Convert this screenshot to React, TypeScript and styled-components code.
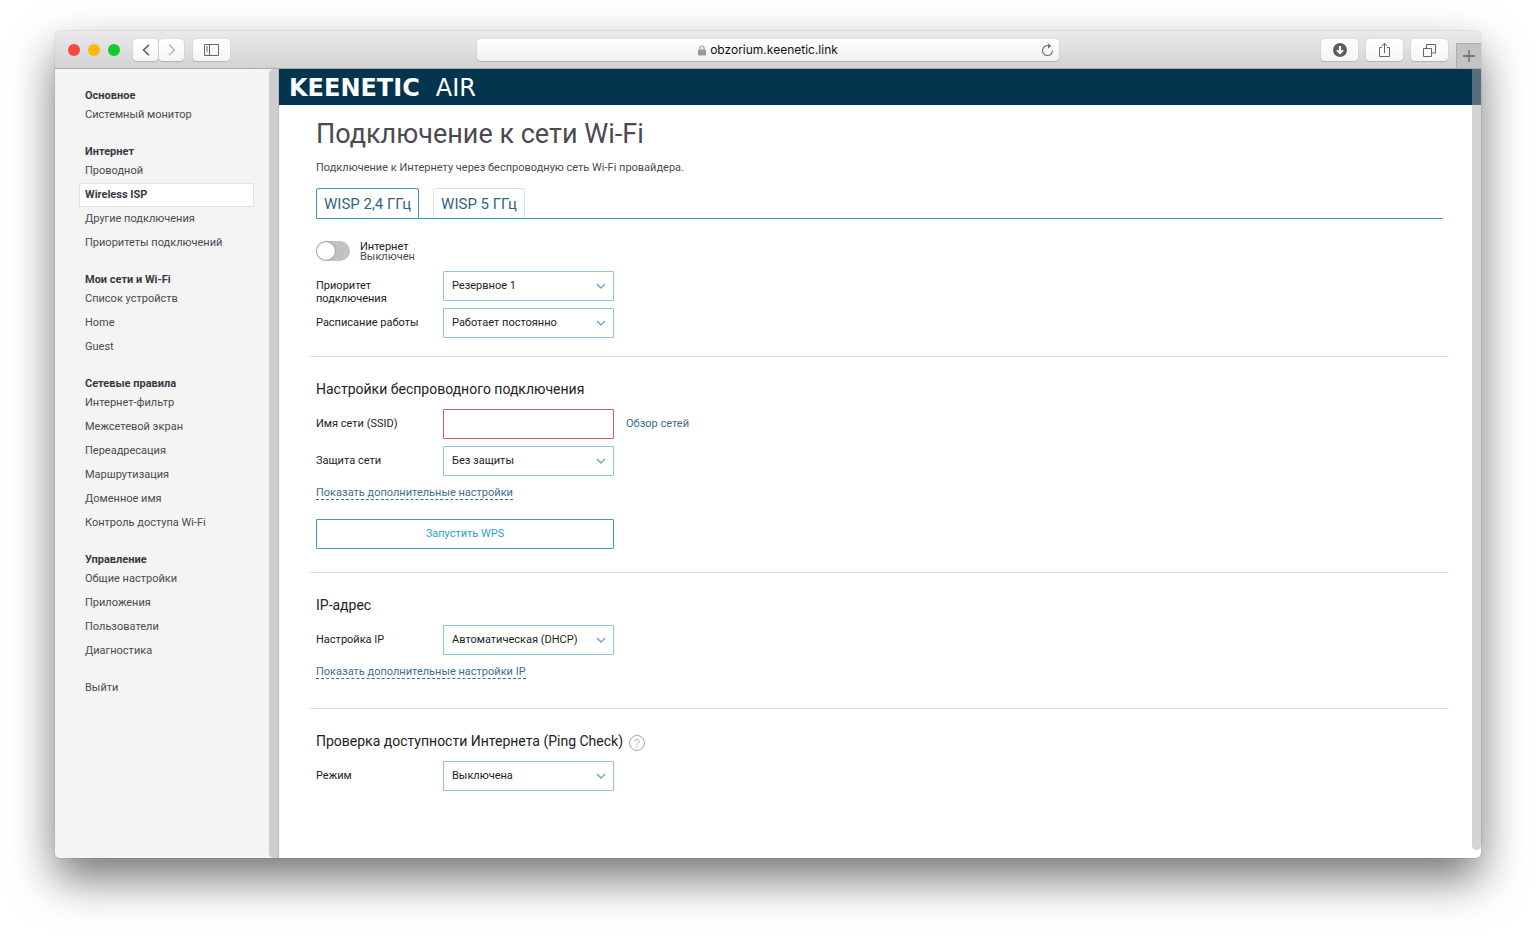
import React, { useState } from "react";
import styled, { createGlobalStyle } from "styled-components";

const color = {
  navy: "#03354e",
  accent: "#3a9fbd",
  control: "#8fc3d8",
  line: "#d3e6ef",
  link: "#3d6d8d",
  text: "#222226",
  muted: "#4b4952",
  side: "#f4f4f4",
};

const GlobalStyle = createGlobalStyle`
  *, *::before, *::after { box-sizing: border-box; }
  body {
    margin: 0;
    background: #fff;
    color: ${color.text};
    font-family: Roboto, "Noto Sans", sans-serif;
    font-size: 11px;
    line-height: 14px;
  }
  button, input, select { font: inherit; color: inherit; margin: 0; }
  h1, h2, p, ul { margin: 0; padding: 0; }
  ul { list-style: none; }
  a { color: inherit; text-decoration: none; }
`;

const Desktop = styled.div`
  display: flex;
  min-height: 100vh;
  padding: 31px 55px 79px;
`;

const Window = styled.div`
  flex: 1;
  min-width: 0;
  display: flex;
  flex-direction: column;
  border-radius: 5px;
  overflow: hidden;
  background: #fff;
  box-shadow: 0 0 1px rgba(0, 0, 0, 0.5), 0 21px 45px rgba(0, 0, 0, 0.54);
`;

const Toolbar = styled.header`
  display: grid;
  grid-template-columns: 1fr minmax(0, 582px) 1fr;
  align-items: center;
  height: 38px;
  padding-top: 1px;
  background: linear-gradient(#ebe9eb, #d3d2d4);
  border-bottom: 1px solid #acabad;
`;

const ToolGroup = styled.div<{ $end?: boolean }>`
  display: flex;
  align-items: center;
  align-self: stretch;
  justify-content: ${(p) => (p.$end ? "flex-end" : "flex-start")};
  gap: ${(p) => (p.$end ? 8 : 9)}px;
  padding-left: ${(p) => (p.$end ? 0 : 13)}px;
`;

const Lights = styled.div`
  display: flex;
  gap: 8px;
  margin-right: 4px;
`;

const Light = styled.button<{ $fill: string }>`
  width: 12px;
  height: 12px;
  padding: 0;
  border: 0;
  border-radius: 50%;
  background: ${(p) => p.$fill};
`;

const NavButtons = styled.div`
  display: flex;
  gap: 1px;
`;

const ToolButton = styled.button<{ $narrow?: boolean }>`
  display: flex;
  align-items: center;
  justify-content: center;
  width: ${(p) => (p.$narrow ? 25 : 37)}px;
  height: 22px;
  padding: 0;
  border: 0;
  border-radius: 4px;
  background: linear-gradient(#fff, #f6f6f6);
  box-shadow: 0 0 1px rgba(0, 0, 0, 0.25), 0 1px 1px rgba(0, 0, 0, 0.15);
  color: #666;
`;

const NewTab = styled.button`
  display: flex;
  align-items: center;
  justify-content: center;
  align-self: flex-end;
  width: 25px;
  height: 25px;
  padding: 0;
  border: solid #adacae;
  border-width: 1px 0 0 1px;
  background: #c3c2c5;
  color: #666;
`;

const AddressBar = styled.div`
  display: grid;
  grid-template-columns: 24px 1fr 24px;
  align-items: center;
  height: 22px;
  border-radius: 4px;
  background: linear-gradient(#fff, #f2f2f2);
  box-shadow: 0 0 1px rgba(0, 0, 0, 0.25), 0 1px 1px rgba(0, 0, 0, 0.15);
`;

const Address = styled.label`
  grid-column: 2;
  display: flex;
  align-items: center;
  justify-content: center;
  gap: 4px;
`;

const AddressInput = styled.input`
  field-sizing: content;
  min-width: 0;
  padding: 0;
  border: 0;
  background: none;
  font-family: Inter, Roboto, sans-serif;
  font-size: 12px;
  line-height: 16px;
  color: #111;
`;

const Reload = styled.button`
  display: flex;
  justify-content: center;
  padding: 0;
  border: 0;
  background: none;
  color: #6d6d6d;
`;

const Body = styled.div`
  flex: 1;
  display: flex;
`;

const Sidebar = styled.nav`
  flex: none;
  display: flex;
  justify-content: space-between;
  width: 224px;
  background: ${color.side};
`;

const Menu = styled.div`
  flex: 1;
  display: flex;
  flex-direction: column;
  gap: 18px;
  padding: 20px 15px 20px 24px;
  color: ${color.muted};
`;

const MenuTitle = styled.h2`
  padding-left: 6px;
  font-size: 11px;
  line-height: 14px;
  font-weight: 700;
  color: #3a3843;
`;

const MenuLink = styled.a<{ $active?: boolean }>`
  display: block;
  padding-left: 5px;
  border: 1px solid ${(p) => (p.$active ? "#e3e3e3" : "transparent")};
  background: ${(p) => (p.$active ? "#fff" : "none")};
  font-weight: ${(p) => (p.$active ? 700 : 400)};
  color: ${(p) => (p.$active ? "#3a3843" : "inherit")};
  line-height: 22px;
`;

const ExitLink = styled.a`
  padding-left: 6px;
`;

const Track = styled.div`
  flex: none;
  width: 10px;
  background: #cecece;
  border-right: 1px solid #b9b9b9;
  border-radius: 5px 0 0 5px;
`;

const Main = styled.main`
  position: relative;
  flex: 1;
  min-width: 0;
`;

const PageScroll = styled.div`
  position: absolute;
  top: 0;
  right: 0;
  bottom: 8px;
  width: 9px;
  border-radius: 0 0 5px 5px;
  background: rgba(170, 170, 170, 0.5);
`;

const Brand = styled.div`
  display: flex;
  align-items: center;
  gap: 16px;
  height: 36px;
  padding: 2px 0 0 10px;
  background: ${color.navy};
  color: #fff;
  font-family: "DejaVu Sans", sans-serif;
  font-size: 24px;
  line-height: 34px;
`;

const BrandName = styled.span`
  font-weight: 700;
`;

const Content = styled.div`
  padding: 13px 32px 40px 30px;
`;

const Intro = styled.div`
  padding: 0 6px 0 7px;
`;

const Title = styled.h1`
  font-size: 27px;
  line-height: 32px;
  font-weight: 400;
  color: ${color.muted};
`;

const Lead = styled.p`
  margin: 11px 0 13px;
  color: ${color.muted};
`;

const Tabs = styled.div`
  display: flex;
  gap: 14px;
  border-bottom: 1px solid ${color.accent};
`;

const Tab = styled.button<{ $active: boolean }>`
  height: 30px;
  padding: 0 7px;
  border: 1px solid ${(p) => (p.$active ? color.accent : color.line)};
  border-bottom: 0;
  border-radius: 3px 3px 0 0;
  background: #fff;
  font-size: 15px;
  color: #33647f;
`;

const Section = styled.section<{ $first?: boolean; $bottom: number }>`
  padding: 22px 6px ${(p) => p.$bottom}px 7px;
  border-top: ${(p) => (p.$first ? 0 : 1)}px solid ${color.line};
`;

const SectionTitle = styled.h2`
  display: flex;
  align-items: center;
  gap: 6px;
  margin-bottom: 10px;
  font-size: 14px;
  line-height: 20px;
  font-weight: 400;
`;

const SwitchRow = styled.label`
  display: flex;
  align-items: center;
  gap: 10px;
  height: 20px;
  margin-bottom: 10px;
`;

const Switch = styled.input`
  appearance: none;
  flex: none;
  width: 34px;
  height: 20px;
  padding: 1px;
  border-radius: 10px;
  background: #c2c2c4;

  &::before {
    content: "";
    display: block;
    width: 18px;
    height: 18px;
    border-radius: 50%;
    background: #fff;
    box-shadow: 0 0 2px rgba(0, 0, 0, 0.5);
  }
  &:checked { background: ${color.accent}; }
  &:checked::before { margin-left: 14px; }
`;

const SwitchText = styled.span`
  display: flex;
  flex-direction: column;
  padding-top: 2px;
  line-height: 10px;
`;

const SwitchState = styled.span`
  color: ${color.muted};
`;

const Rows = styled.div`
  display: flex;
  flex-direction: column;
  gap: 7px;
`;

const Row = styled.div`
  display: grid;
  grid-template: 30px / 127px 171px auto;
  justify-content: start;
`;

const Label = styled.label`
  padding: 8px 16px 0 0;
  line-height: 13px;
`;

const SelectBox = styled.div`
  display: grid;
  align-items: center;
  color: #6ba6c4;

  & > * { grid-area: 1 / 1; }
  & > svg {
    justify-self: end;
    margin-right: 8px;
    pointer-events: none;
  }
`;

const Select = styled.select`
  appearance: none;
  width: 100%;
  height: 30px;
  padding: 0 24px 1px 8px;
  border: 1px solid ${color.control};
  border-radius: 1px;
  background: #fff;
  color: ${color.text};
`;

const TextInput = styled.input`
  width: 100%;
  height: 30px;
  padding: 0 8px;
  border: 1px solid #cf5d70;
  border-radius: 1px;
  background: #fff;
`;

const SideLink = styled.a`
  padding: 8px 0 0 12px;
  line-height: 13px;
  color: ${color.link};
`;

const MoreLink = styled.a`
  display: block;
  width: fit-content;
  margin-top: 11px;
  border-bottom: 1px dashed ${color.link};
  line-height: 12px;
  color: ${color.link};
`;

const WpsButton = styled.button`
  display: block;
  width: 298px;
  height: 30px;
  margin-top: 19px;
  padding: 0 0 1px;
  border: 1px solid ${color.accent};
  border-radius: 1px;
  background: #fff;
  color: #2f9fca;
`;

const HelpButton = styled.button`
  display: flex;
  padding: 4px 0 0;
  border: 0;
  background: none;
  color: #a5a5a8;
`;

const Icon = ({ w, h, children, sw = 1 }: { w: number; h: number; sw?: number; children: React.ReactNode }) => (
  <svg width={w} height={h} viewBox={`0 0 ${w} ${h}`} fill="none" stroke="currentColor" strokeWidth={sw} aria-hidden="true">
    {children}
  </svg>
);

const menu = [
  { title: "Основное", items: ["Системный монитор"] },
  { title: "Интернет", items: ["Проводной", "Wireless ISP", "Другие подключения", "Приоритеты подключений"] },
  { title: "Мои сети и Wi-Fi", items: ["Список устройств", "Home", "Guest"] },
  {
    title: "Сетевые правила",
    items: ["Интернет-фильтр", "Межсетевой экран", "Переадресация", "Маршрутизация", "Доменное имя", "Контроль доступа Wi-Fi"],
  },
  { title: "Управление", items: ["Общие настройки", "Приложения", "Пользователи", "Диагностика"] },
];

const SelectRow = ({ id, label, value }: { id: string; label: string; value: string }) => (
  <Row>
    <Label htmlFor={id}>{label}</Label>
    <SelectBox>
      <Select id={id} defaultValue={value}>
        <option>{value}</option>
      </Select>
      <Icon w={10} h={6} sw={1.4}>
        <path d="M1 1l4 4 4-4" />
      </Icon>
    </SelectBox>
  </Row>
);

export default function App() {
  const [tab, setTab] = useState(0);
  const [online, setOnline] = useState(false);

  return (
    <>
      <GlobalStyle />
      <Desktop>
        <Window>
          <Toolbar>
            <ToolGroup>
              <Lights>
                <Light $fill="#f9463f" aria-label="Закрыть" />
                <Light $fill="#fdb80b" aria-label="Свернуть" />
                <Light $fill="#10cb2c" aria-label="Развернуть" />
              </Lights>
              <NavButtons>
                <ToolButton $narrow aria-label="Назад">
                  <Icon w={8} h={12} sw={1.6}>
                    <path d="M7 .8L1.5 6 7 11.2" />
                  </Icon>
                </ToolButton>
                <ToolButton $narrow aria-label="Вперёд">
                  <Icon w={8} h={12}>
                    <path d="M1 .8L6.5 6 1 11.2" stroke="#b5b5b5" strokeWidth="1.4" />
                  </Icon>
                </ToolButton>
              </NavButtons>
              <ToolButton aria-label="Боковое меню">
                <Icon w={15} h={12}>
                  <path d="M.5 .5h14v11H.5zM5.5 .5v11M2 3h2M2 5h2M2 7h2" />
                </Icon>
              </ToolButton>
            </ToolGroup>

            <AddressBar>
              <Address>
                <svg width="8" height="11" viewBox="0 0 8 11" aria-hidden="true">
                  <path d="M2 5V3a2 2 0 0 1 4 0v2" fill="none" stroke="#999" strokeWidth="1.2" />
                  <rect y="4.6" width="8" height="6" rx="1" fill="#999" />
                </svg>
                <AddressInput aria-label="Адрес" defaultValue="obzorium.keenetic.link" />
              </Address>
              <Reload aria-label="Обновить">
                <Icon w={13} h={14}>
                  <path d="M11.5 7.5A5 5 0 1 1 8 2.8" strokeWidth="1.1" />
                  <path d="M7.2 .2L10.4 3.2 7 5.4z" fill="currentColor" stroke="none" />
                </Icon>
              </Reload>
            </AddressBar>

            <ToolGroup $end>
              <ToolButton aria-label="Загрузки">
                <svg width="14" height="14" viewBox="0 0 14 14" aria-hidden="true">
                  <circle cx="7" cy="7" r="7" fill="#5e5e5e" />
                  <path d="M7 3v7M4 7.2l3 3 3-3" fill="none" stroke="#fff" strokeWidth="2" />
                </svg>
              </ToolButton>
              <ToolButton aria-label="Поделиться">
                <Icon w={13} h={16}>
                  <path d="M4 5.5H1.5v9h10v-9H9M6.5 11V1.2M3.8 4L6.5 1.2 9.2 4" />
                </Icon>
              </ToolButton>
              <ToolButton aria-label="Все вкладки">
                <Icon w={13} h={13}>
                  <path d="M.5 4.5h8v8h-8zM3.5 4.5v-4h9v8.5h-4" />
                </Icon>
              </ToolButton>
              <NewTab aria-label="Новая вкладка">
                <Icon w={12} h={12}>
                  <path d="M6 0v12M0 6h12" strokeWidth="1.3" />
                </Icon>
              </NewTab>
            </ToolGroup>
          </Toolbar>

          <Body>
            <Sidebar>
              <Menu>
                {menu.map((group) => (
                  <div key={group.title}>
                    <MenuTitle>{group.title}</MenuTitle>
                    <ul>
                      {group.items.map((item) => (
                        <li key={item}>
                          <MenuLink href="#" $active={item === "Wireless ISP"}>
                            {item}
                          </MenuLink>
                        </li>
                      ))}
                    </ul>
                  </div>
                ))}
                <ExitLink href="#">Выйти</ExitLink>
              </Menu>
              <Track />
            </Sidebar>

            <Main>
              <Brand>
                <BrandName>KEENETIC</BrandName>
                <span>AIR</span>
              </Brand>

              <Content>
                <Intro>
                  <Title>Подключение к сети Wi-Fi</Title>
                  <Lead>Подключение к Интернету через беспроводную сеть Wi-Fi провайдера.</Lead>
                  <Tabs role="tablist">
                    {["WISP 2,4 ГГц", "WISP 5 ГГц"].map((name, i) => (
                      <Tab key={name} role="tab" aria-selected={tab === i} $active={tab === i} onClick={() => setTab(i)}>
                        {name}
                      </Tab>
                    ))}
                  </Tabs>
                </Intro>

                <Section $first $bottom={18}>
                  <SwitchRow>
                    <Switch type="checkbox" role="switch" checked={online} onChange={(e) => setOnline(e.target.checked)} />
                    <SwitchText>
                      <span>Интернет</span>
                      <SwitchState>{online ? "Включен" : "Выключен"}</SwitchState>
                    </SwitchText>
                  </SwitchRow>
                  <Rows>
                    <SelectRow id="priority" label="Приоритет подключения" value="Резервное 1" />
                    <SelectRow id="schedule" label="Расписание работы" value="Работает постоянно" />
                  </Rows>
                </Section>

                <Section $bottom={23}>
                  <SectionTitle>Настройки беспроводного подключения</SectionTitle>
                  <Rows>
                    <Row>
                      <Label htmlFor="ssid">Имя сети (SSID)</Label>
                      <TextInput id="ssid" type="text" />
                      <SideLink href="#">Обзор сетей</SideLink>
                    </Row>
                    <SelectRow id="security" label="Защита сети" value="Без защиты" />
                  </Rows>
                  <MoreLink href="#">Показать дополнительные настройки</MoreLink>
                  <WpsButton>Запустить WPS</WpsButton>
                </Section>

                <Section $bottom={29}>
                  <SectionTitle>IP-адрес</SectionTitle>
                  <SelectRow id="ip" label="Настройка IP" value="Автоматическая (DHCP)" />
                  <MoreLink href="#">Показать дополнительные настройки IP</MoreLink>
                </Section>

                <Section $bottom={18}>
                  <SectionTitle>
                    Проверка доступности Интернета (Ping Check)
                    <HelpButton aria-label="Справка">
                      <Icon w={16} h={16}>
                        <circle cx="8" cy="8" r="7.5" />
                        <path d="M5.8 6.6a2.2 2.2 0 1 1 3.2 1.9c-.7.4-1 .7-1 1.5M8 11.2v1.2" />
                      </Icon>
                    </HelpButton>
                  </SectionTitle>
                  <SelectRow id="ping" label="Режим" value="Выключена" />
                </Section>
              </Content>
              <PageScroll />
            </Main>
          </Body>
        </Window>
      </Desktop>
    </>
  );
}
